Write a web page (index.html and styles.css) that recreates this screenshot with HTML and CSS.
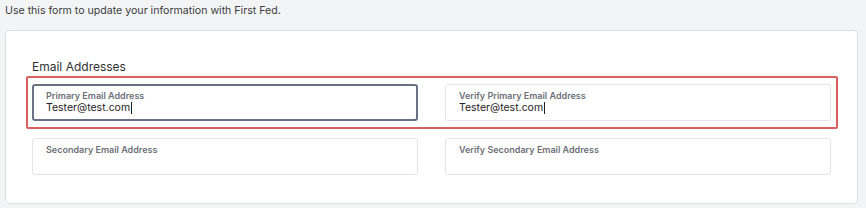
FILE: index.html
```html
<!DOCTYPE html>
<html lang="en">
<head>
<meta charset="utf-8">
<title>Update Information</title>
<link rel="stylesheet" href="styles.css">
</head>
<body>
<p class="intro">Use this form to update your information with First Fed.</p>
<section class="card">
  <h2 class="heading">Email Addresses</h2>
  <div class="highlight">
    <label class="field field-focus">
      <span class="field-label">Primary Email Address</span>
      <span class="field-value">Tester@test.com<span class="caret"></span></span>
    </label>
    <label class="field">
      <span class="field-label">Verify Primary Email Address</span>
      <span class="field-value">Tester@test.com<span class="caret"></span></span>
    </label>
  </div>
  <div class="row">
    <label class="field">
      <span class="field-label">Secondary Email Address</span>
      <span class="field-value"></span>
    </label>
    <label class="field">
      <span class="field-label">Verify Secondary Email Address</span>
      <span class="field-value"></span>
    </label>
  </div>
</section>
</body>
</html>
```
FILE: styles.css
```css
html, body {
  margin: 0;
  padding: 0;
}
body {
  background: #f3f4f6;
  font-family: Inter, "Noto Sans", "DejaVu Sans", sans-serif;
  color: #2b2d31;
  width: 866px;
  height: 208px;
  overflow: hidden;
}
.intro {
  margin: 0;
  padding: 4px 0 0 5px;
  font-size: 10.6px;
  line-height: 14px;
  color: #3a3c40;
}
.card {
  margin: 12px 8px 0 5px;
  background: #ffffff;
  border: 1px solid #dcdfe4;
  border-radius: 4px;
  padding: 28px 19px 28px 20px;
}
.heading {
  margin: 0 0 2px 6px;
  font-size: 12px;
  line-height: 15px;
  font-weight: 400;
  color: #2f3134;
}
.highlight {
  border: 2px solid #d9605f;
  border-radius: 2px;
  padding: 6px 5px 6px 4px;
  display: grid;
  grid-template-columns: 1fr 1fr;
  column-gap: 27px;
}
.row {
  margin-top: 9px;
  padding: 0 7px 0 6px;
  display: grid;
  grid-template-columns: 1fr 1fr;
  column-gap: 27px;
}
.field {
  display: flex;
  flex-direction: column;
  height: 37px;
  box-sizing: border-box;
  border: 1px solid #e3e5e9;
  border-radius: 3px;
  padding: 5px 13px 0;
}
.field-focus {
  border: 2px solid #687284;
  padding: 4px 12px 0;
}
.field-label {
  font-size: 9px;
  line-height: 11px;
  font-weight: 600;
  color: #6d7079;
}
.field-value {
  font-size: 10.5px;
  line-height: 14px;
  color: #1f2125;
  display: flex;
  align-items: center;
}
.caret {
  display: inline-block;
  width: 1px;
  height: 12px;
  background: #1f2125;
  margin-left: 1px;
}
```
